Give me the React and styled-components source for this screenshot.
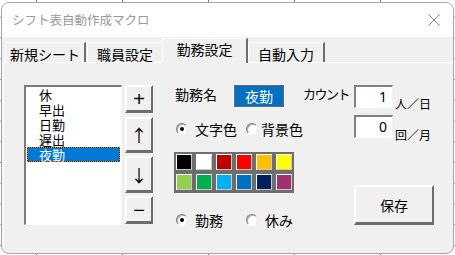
import React from 'react';
import styled, { createGlobalStyle } from 'styled-components';

const Global = createGlobalStyle`
  html, body { margin: 0; padding: 0; }
  body {
    width: 455px;
    height: 255px;
    overflow: hidden;
    background-color: #ffffff;
    background-image:
      linear-gradient(to right, #7a7a7a 1px, transparent 1px),
      linear-gradient(to bottom, #9a9a9a 1px, transparent 1px);
    background-size: 86px 100%, 100% 20.75px;
    background-position: 36px 0, 0 -4px;
    font-family: "Noto Sans CJK JP", "Noto Sans", sans-serif;
    color: #000;
  }
  #root { width: 455px; height: 255px; }
`;

const Window = styled.div`
  box-sizing: border-box;
  margin: 2px 0 0 1px;
  width: 453px;
  height: 252px;
  border: 1px solid #a8a8a8;
  border-radius: 8px;
  overflow: hidden;
  background: #f0f0f0;
  display: flex;
  flex-direction: column;
`;

const TitleBar = styled.div`
  height: 34px;
  flex: none;
  background: #ffffff;
  display: flex;
  align-items: center;
  justify-content: space-between;
  padding: 0 13px 0 10px;
`;

const Title = styled.span`
  font-size: 12.5px;
  color: #9a9a9a;
  line-height: 14px;
`;

const Body = styled.div`
  flex: 1;
  display: flex;
  flex-direction: column;
`;

const TabStrip = styled.div`
  height: 25px;
  flex: none;
  display: flex;
  align-items: flex-end;
  padding-left: 3px;
`;

const Tab = styled.div`
  box-sizing: border-box;
  position: relative;
  width: ${p => p.$w}px;
  height: ${p => (p.$active ? 25 : 20)}px;
  margin-left: ${p => p.$ml || 0}px;
  margin-bottom: ${p => (p.$active ? -1 : 0)}px;
  z-index: ${p => (p.$active ? 2 : 1)};
  background: #f0f0f0;
  border-top: 1px solid #ffffff;
  border-left: 1px solid #ffffff;
  border-right: 2px solid #6e6e6e;
  display: flex;
  justify-content: center;
  align-items: flex-start;
  padding-top: ${p => (p.$active ? 2 : 3)}px;
  font-size: 14px;
  line-height: 16px;
  white-space: nowrap;
`;

const Panel = styled.div`
  flex: 1;
  margin-left: 1px;
  border-top: 1px solid #ffffff;
  border-left: 1px solid #ffffff;
  display: flex;
  align-items: flex-start;
  padding: 22px 0 0 20px;
`;

const ListBox = styled.div`
  box-sizing: border-box;
  width: 98px;
  height: 140px;
  background: #ffffff;
  border-top: 2px solid #7c7c7c;
  border-left: 2px solid #7c7c7c;
  border-right: 1px solid #f4f4f4;
  border-bottom: 1px solid #ffffff;
  padding: 0 0 0 1px;
`;

const ListItem = styled.div`
  box-sizing: border-box;
  height: 15px;
  line-height: 15px;
  font-size: 13px;
  padding-left: 12px;
  background: ${p => (p.$selected ? '#0078d7' : 'transparent')};
  color: ${p => (p.$selected ? '#ffffff' : '#000000')};
  outline: ${p => (p.$selected ? '1px dotted #e88a1a' : 'none')};
  outline-offset: -1px;
  box-shadow: ${p => (p.$selected ? 'inset 0 0 0 1px #202020' : 'none')};
  margin-right: 1px;
`;

const ButtonCol = styled.div`
  margin-left: 3px;
  width: 28px;
  display: flex;
  flex-direction: column;
`;

const RaisedButton = styled.div`
  box-sizing: border-box;
  width: ${p => p.$w || 28}px;
  height: ${p => p.$h}px;
  margin-top: ${p => p.$mt || 0}px;
  background: #f0f0f0;
  border-style: solid;
  border-width: 2px 2px 3px 2px;
  border-color: #ffffff #6d6d6d #6d6d6d #ffffff;
  display: flex;
  align-items: center;
  justify-content: center;
  font-size: ${p => p.$fs || 16}px;
  line-height: 1;
  color: #000;
  font-family: ${p => (p.$sym ? '"Liberation Sans", sans-serif' : '"Noto Sans CJK JP", sans-serif')};
`;

const RightArea = styled.div`
  margin-left: 22px;
  display: flex;
  flex-direction: column;
`;

const TopRow = styled.div`
  height: 22px;
  display: flex;
  align-items: flex-start;
`;

const Label = styled.span`
  width: ${p => p.$w}px;
  margin-left: ${p => p.$ml || 0}px;
  padding-top: 1px;
  font-size: ${p => p.$fs || 14}px;
  letter-spacing: ${p => p.$ls || 0}px;
  line-height: 16px;
  white-space: nowrap;
`;

const NameBox = styled.div`
  box-sizing: border-box;
  width: 50px;
  height: 22px;
  background: #0070c0;
  border: 1px solid #6a6a6a;
  color: #ffffff;
  font-size: 14px;
  display: flex;
  align-items: center;
  justify-content: center;
  line-height: 1;
`;

const NumInput = styled.div`
  box-sizing: border-box;
  width: 39px;
  height: 23px;
  background: #ffffff;
  border-style: solid;
  border-width: 2px 1px 1px 2px;
  border-color: #808080 #f4f4f4 #ffffff #808080;
  font-size: 14px;
  text-align: right;
  padding: 2px 5px 0 0;
  line-height: 16px;
  font-family: "Noto Sans", sans-serif;
`;

const Unit = styled.span`
  align-self: flex-end;
  margin: 0 0 -3px 2px;
  font-size: 12px;
  line-height: 13px;
  white-space: nowrap;
`;

const CountRow = styled.div`
  display: flex;
  align-items: flex-start;
`;

const LowerBlock = styled.div`
  display: flex;
`;

const LeftCol = styled.div`
  width: 179px;
  display: flex;
  flex-direction: column;
`;

const RightCol = styled.div`
  display: flex;
  flex-direction: column;
  padding-top: 8px;
`;

const RadioRow = styled.div`
  display: flex;
  height: 16px;
  align-items: center;
  margin-top: ${p => p.$mt}px;
  padding-left: 1px;
`;

const RadioOption = styled.div`
  display: flex;
  align-items: center;
  width: ${p => p.$w || 'auto'};
  font-size: 14px;
  line-height: 16px;
  white-space: nowrap;
`;

const RadioCircle = styled.span`
  box-sizing: border-box;
  width: 12px;
  height: 12px;
  border-radius: 50%;
  background: #ffffff;
  border: 1px solid;
  border-color: #7a7a7a #e6e6e6 #ffffff #7a7a7a;
  box-shadow: inset 1px 1px 0 #b0b0b0;
  display: flex;
  align-items: center;
  justify-content: center;
  margin-right: ${p => p.$gap}px;
  flex: none;
  &::after {
    content: '';
    display: ${p => (p.$checked ? 'block' : 'none')};
    width: 4px;
    height: 4px;
    border-radius: 50%;
    background: #000;
  }
`;

const Palette = styled.div`
  margin: 15px 0 0 -1px;
  display: grid;
  grid-template-columns: repeat(6, 20px);
  grid-auto-rows: 20px;
  width: 120px;
  background: #6e6e6e;
  border-bottom: 1px solid #6e6e6e;
`;

const Swatch = styled.div`
  box-sizing: border-box;
  border: 2px solid #6e6e6e;
  background: ${p => p.$c};
  box-shadow: inset 1px 1px 0 #ffffff, inset -1px -1px 0 #c8c8c8;
`;

const colors = [
  '#000000', '#ffffff', '#c00000', '#ff0000', '#ffc000', '#ffff00',
  '#92d050', '#00b050', '#00b0f0', '#0070c0', '#002060', '#a0306e',
];

const items = ['休', '早出', '日勤', '遅出', '夜勤'];

export default function App() {
  return (
    <>
      <Global />
      <Window>
        <TitleBar>
          <Title>シフト表自動作成マクロ</Title>
          <svg width="12" height="12" viewBox="0 0 12 12">
            <path d="M0.5 0.5 L11.5 11.5 M11.5 0.5 L0.5 11.5" stroke="#8a8a8a" strokeWidth="1" fill="none" />
          </svg>
        </TitleBar>
        <Body>
          <TabStrip>
            <Tab $w={81}>新規シート</Tab>
            <Tab $w={77} $ml={1}>職員設定</Tab>
            <Tab $w={86} $ml={-2} $active>勤務設定</Tab>
            <Tab $w={77}>自動入力</Tab>
          </TabStrip>
          <Panel>
            <ListBox>
              {items.map((it, i) => (
                <ListItem key={it} $selected={i === 4}>{it}</ListItem>
              ))}
            </ListBox>
            <ButtonCol>
              <RaisedButton $h={28} $fs={20} $sym>+</RaisedButton>
              <RaisedButton $h={36} $mt={4} $fs={17}>↑</RaisedButton>
              <RaisedButton $h={37} $mt={3} $fs={17}>↓</RaisedButton>
              <RaisedButton $h={28} $mt={3} $fs={20} $sym>−</RaisedButton>
            </ButtonCol>
            <RightArea>
              <TopRow>
                <Label $w={59}>勤務名</Label>
                <NameBox>夜勤</NameBox>
                <Label $w={51} $ml={19} $fs={13} $ls={-1.5}>カウント</Label>
                <NumInput>1</NumInput>
                <Unit>人／日</Unit>
              </TopRow>
              <LowerBlock>
                <LeftCol>
                  <RadioRow $mt={14}>
                    <RadioOption $w="70px"><RadioCircle $checked $gap={7} />文字色</RadioOption>
                    <RadioOption><RadioCircle $gap={3} />背景色</RadioOption>
                  </RadioRow>
                  <Palette>
                    {colors.map(c => <Swatch key={c} $c={c} />)}
                  </Palette>
                  <RadioRow $mt={19}>
                    <RadioOption $w="70px"><RadioCircle $checked $gap={7} />勤務</RadioOption>
                    <RadioOption><RadioCircle $gap={7} />休み</RadioOption>
                  </RadioRow>
                </LeftCol>
                <RightCol>
                  <CountRow>
                    <NumInput>0</NumInput>
                    <Unit>回／月</Unit>
                  </CountRow>
                  <RaisedButton $w={80} $h={40} $mt={47} $fs={14}>保存</RaisedButton>
                </RightCol>
              </LowerBlock>
            </RightArea>
          </Panel>
        </Body>
      </Window>
    </>
  );
}
